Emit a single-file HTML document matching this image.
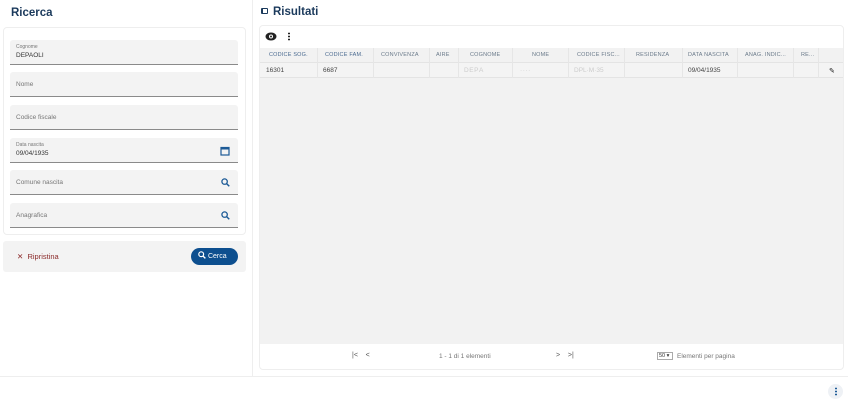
<!DOCTYPE html>
<html><head><meta charset="utf-8"><style>
*{box-sizing:border-box;margin:0;padding:0}
body{width:848px;height:400px;background:#fff;font-family:"Liberation Sans",sans-serif;position:relative;overflow:hidden;color:#333}
.abs{position:absolute}
h1{position:absolute;font-size:11.5px;font-weight:bold;color:#1b3a5c}
.card{position:absolute;border:1px solid #eee;border-radius:4px;background:#fff}
.field{position:absolute;left:10px;width:228px;height:25px;background:#f3f3f3;border-bottom:1px solid #8a8a8a;border-radius:3px 3px 0 0}
.field .lab{position:absolute;left:6px;top:9px;font-size:6.5px;color:#777}
.field .sm{position:absolute;left:6px;top:4px;font-size:5px;color:#777}
.field .val{position:absolute;left:6px;top:12px;font-size:6.5px;color:#333}
.field svg{position:absolute;right:8px;top:8px}
.th,.td{position:absolute;font-size:5.5px;white-space:nowrap}
.th{top:52px;color:#6a7a8a;letter-spacing:.2px}
.td{top:67px;color:#444;font-size:6.5px}
.vl{position:absolute;width:1px;background:#e6e6e6}
</style></head><body>
<h1 style="left:11px;top:7px">Ricerca</h1>
<div class="abs" style="left:252px;top:0;width:1px;height:376px;background:#eee"></div>
<div class="card" style="left:3px;top:27px;width:243px;height:208px"></div>
<div class="field" style="top:40px"><span class="sm">Cognome</span><span class="val">DEPAOLI</span></div>
<div class="field" style="top:72px"><span class="lab">Nome</span></div>
<div class="field" style="top:105px"><span class="lab">Codice fiscale</span></div>
<div class="field" style="top:138px"><span class="sm">Data nascita</span><span class="val">09/04/1935</span>
<svg width="10" height="10" viewBox="0 0 10 10"><rect x="1" y="1.5" width="8" height="7.5" fill="none" stroke="#1c5a96" stroke-width="1.2"/><rect x="1" y="1.5" width="8" height="2" fill="#1c5a96"/></svg></div>
<div class="field" style="top:170px"><span class="lab">Comune nascita</span>
<svg width="9" height="9" viewBox="0 0 10 10"><circle cx="4" cy="4" r="3" fill="none" stroke="#1c5a96" stroke-width="1.4"/><line x1="6.2" y1="6.2" x2="9.2" y2="9.2" stroke="#1c5a96" stroke-width="1.6"/></svg></div>
<div class="field" style="top:203px"><span class="lab">Anagrafica</span>
<svg width="9" height="9" viewBox="0 0 10 10"><circle cx="4" cy="4" r="3" fill="none" stroke="#1c5a96" stroke-width="1.4"/><line x1="6.2" y1="6.2" x2="9.2" y2="9.2" stroke="#1c5a96" stroke-width="1.6"/></svg></div>
<div class="abs" style="left:3px;top:241px;width:243px;height:31px;background:#f3f3f3;border-radius:3px"></div>
<div class="abs" style="left:17px;top:252px;font-size:7.5px;color:#8b2a2a">✕ &nbsp;Ripristina</div>
<div class="abs" style="left:191px;top:248px;width:47px;height:17px;background:#0d4f8f;border-radius:9px;color:#fff;font-size:7px;line-height:17px;padding-left:7px">
<svg width="8" height="8" viewBox="0 0 10 10" style="vertical-align:-1px"><circle cx="4" cy="4" r="3" fill="none" stroke="#fff" stroke-width="1.5"/><line x1="6.2" y1="6.2" x2="9.2" y2="9.2" stroke="#fff" stroke-width="1.7"/></svg> Cerca</div>

<div class="abs" style="left:261px;top:8px;width:7px;height:6px;border:1px solid #1b3a5c;border-left-width:2.5px;border-radius:1px"></div>
<h1 style="left:273px;top:6px">Risultati</h1>
<div class="card" style="left:259px;top:25px;width:585px;height:345px"></div>
<svg class="abs" style="left:265px;top:32px" width="12" height="9" viewBox="0 0 12 9"><ellipse cx="6" cy="4.5" rx="5.5" ry="4" fill="#222"/><circle cx="6" cy="4.5" r="2" fill="#fff"/><circle cx="6" cy="4.5" r="1" fill="#222"/></svg>
<div class="abs" style="left:288px;top:32px;width:2px;height:9px;background:radial-gradient(circle,#222 0.9px,transparent 1px) 0 0/2px 3px"></div>
<div class="abs" style="left:260px;top:48px;width:583px;height:296px;background:#f2f2f2"></div>
<div class="abs" style="left:260px;top:62px;width:583px;height:16px;background:#f4f4f4;border-top:1px solid #e4e4e4;border-bottom:1px solid #e4e4e4"></div>
<div class="vl" style="left:317px;top:48px;height:30px"></div>
<div class="vl" style="left:373px;top:48px;height:30px"></div>
<div class="vl" style="left:429px;top:48px;height:30px"></div>
<div class="vl" style="left:458px;top:48px;height:30px"></div>
<div class="vl" style="left:512px;top:48px;height:30px"></div>
<div class="vl" style="left:568px;top:48px;height:30px"></div>
<div class="vl" style="left:624px;top:48px;height:30px"></div>
<div class="vl" style="left:682px;top:48px;height:30px"></div>
<div class="vl" style="left:737px;top:48px;height:30px"></div>
<div class="vl" style="left:793px;top:48px;height:30px"></div>
<div class="vl" style="left:818px;top:48px;height:30px"></div>
<div class="th" style="left:269px;color:#4a6a90">CODICE SOG.</div>
<div class="th" style="left:325px;color:#4a6a90">CODICE FAM.</div>
<div class="th" style="left:381px">CONVIVENZA</div>
<div class="th" style="left:436px">AIRE</div>
<div class="th" style="left:470px">COGNOME</div>
<div class="th" style="left:532px">NOME</div>
<div class="th" style="left:577px">CODICE FISC...</div>
<div class="th" style="left:636px">RESIDENZA</div>
<div class="th" style="left:688px">DATA NASCITA</div>
<div class="th" style="left:745px">ANAG. INDIC...</div>
<div class="th" style="left:801px">RE...</div>
<div class="td" style="left:266px">16301</div>
<div class="td" style="left:323px">6687</div>
<div class="td" style="left:464px;color:#ccc">D&#8202;E&#8202;P&#8202;A</div>
<div class="td" style="left:520px;color:#ccc">·&#8202;·&#8202;·&#8202;·</div>
<div class="td" style="left:574px;color:#ccc">DPL·M·35</div>
<div class="td" style="left:688px">09/04/1935</div>
<div class="td" style="left:829px;font-size:7px;color:#111">✎</div>
<div class="abs" style="left:352px;top:352px;font-size:7px;color:#555">|&lt; &nbsp;&nbsp;&nbsp;&lt;</div>
<div class="abs" style="left:439px;top:353px;font-size:6.5px;color:#777">1 - 1 di 1 elementi</div>
<div class="abs" style="left:556px;top:352px;font-size:7px;color:#555">&gt; &nbsp;&nbsp;&nbsp;&gt;|</div>
<div class="abs" style="left:657px;top:352px;width:16px;height:8px;border:1px solid #aaa;font-size:5.5px;line-height:6px;padding-left:1px">50 ▾</div>
<div class="abs" style="left:677px;top:353px;font-size:6.5px;color:#777">Elementi per pagina</div>
<div class="abs" style="left:0;top:376px;width:848px;height:1px;background:#eee"></div>
<div class="abs" style="left:828px;top:384px;width:15px;height:15px;border-radius:50%;background:#eef1f5"></div>
<div class="abs" style="left:835px;top:387px;width:2px;height:9px;background:radial-gradient(circle,#1c5a96 0.9px,transparent 1px) 0 0/2px 3px"></div>
</body></html>
